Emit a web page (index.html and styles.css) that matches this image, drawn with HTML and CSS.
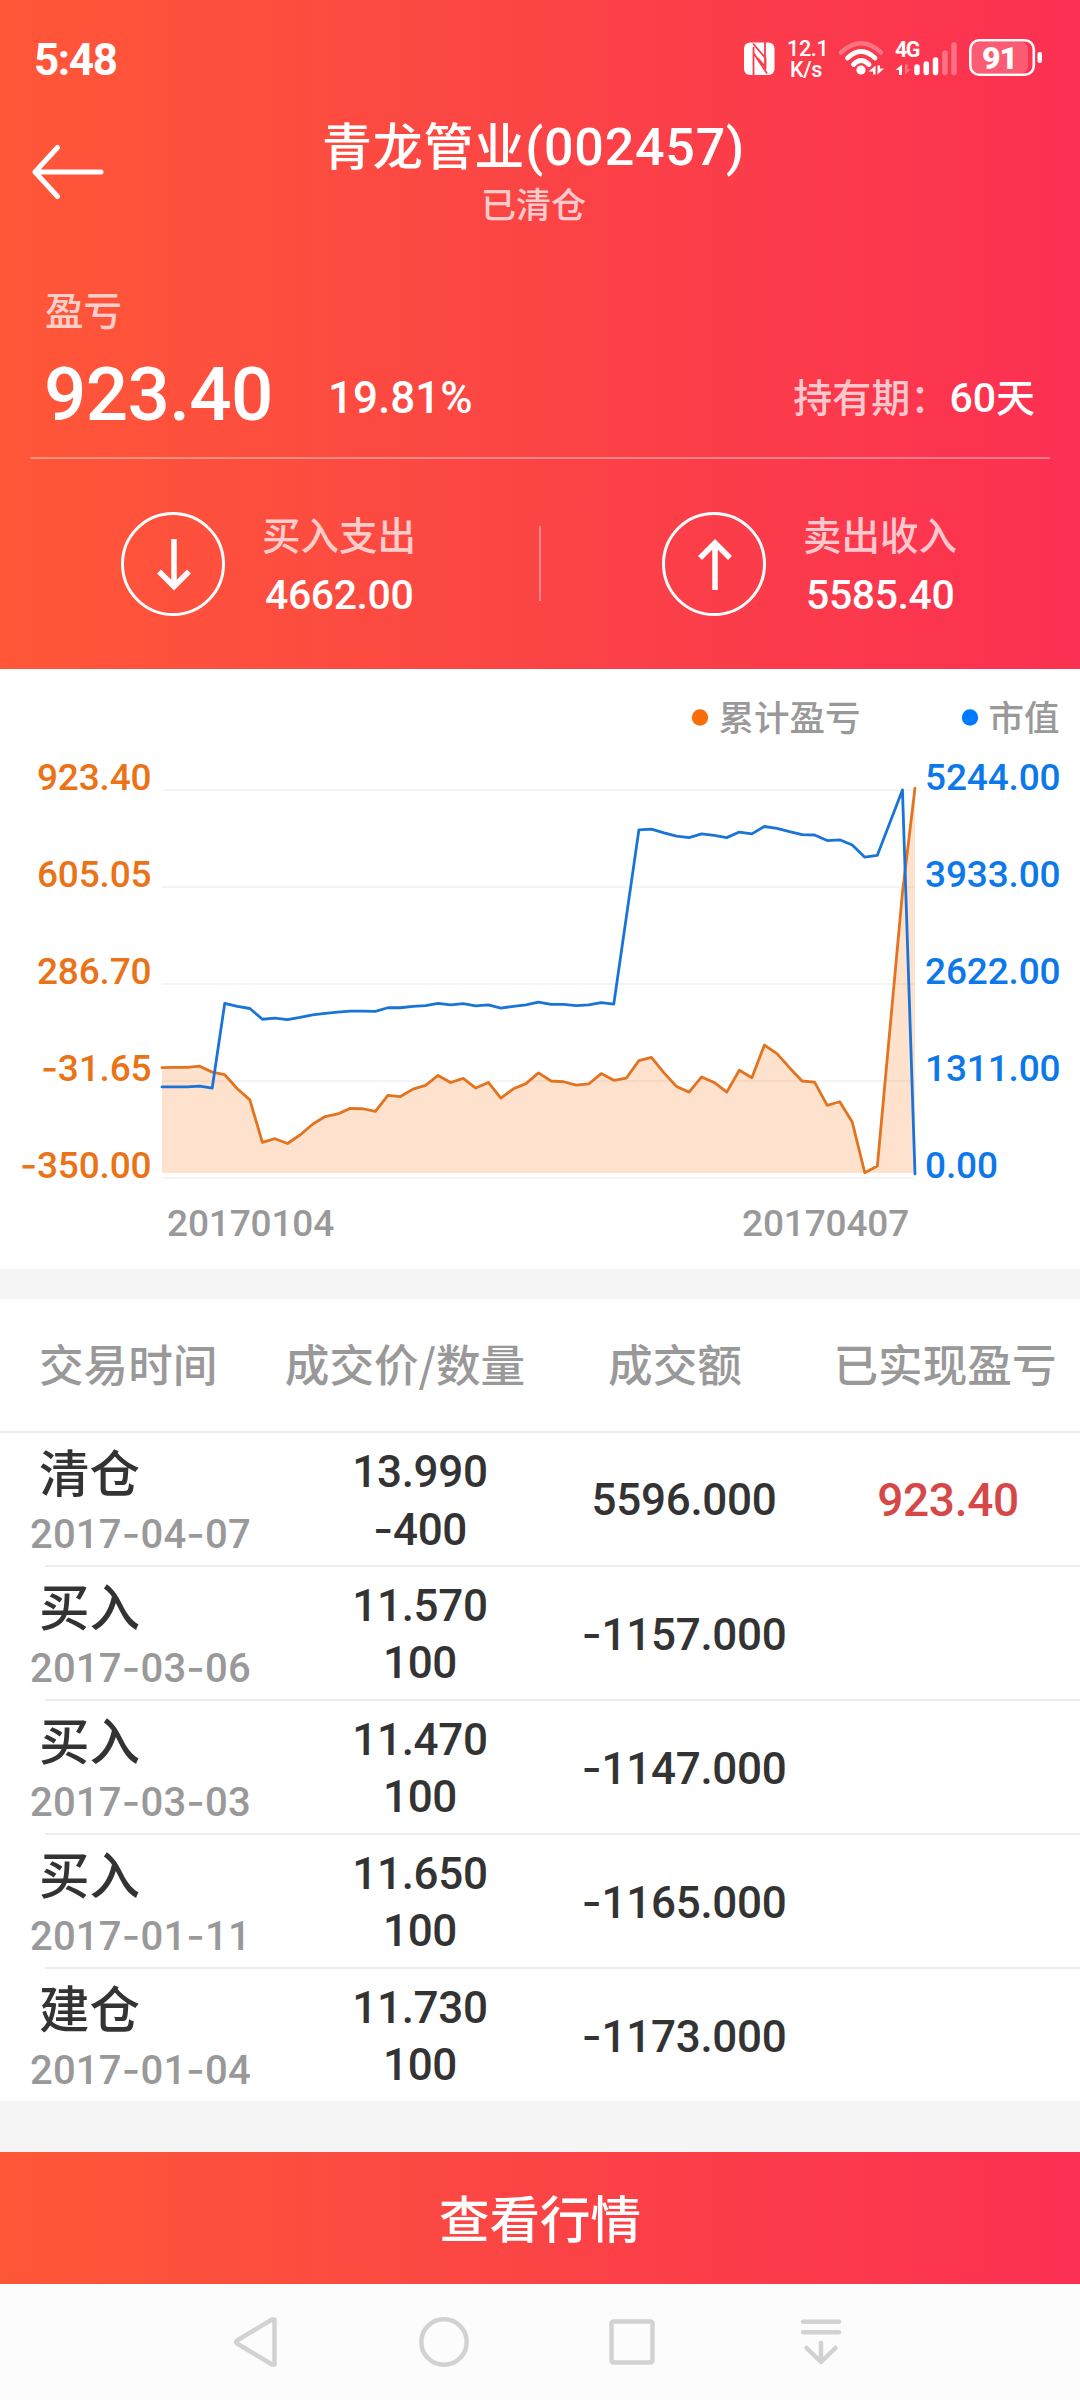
FILE: index.html
```html
<!DOCTYPE html>
<html lang="zh-CN">
<head>
<meta charset="utf-8">
<title>青龙管业(002457)</title>
<link rel="stylesheet" href="styles.css">
</head>
<body>
<div class="screen">
  <header class="hero">
    <div class="status">
      <span class="clock">5:48</span>
      <svg class="status-icons" viewBox="740 30 310 56" width="310" height="56">
        <rect x="744" y="42.500" width="30.500" height="32.500" rx="6" fill="#fff"/>
        <path d="M753.500 75V47M753 43.500L765.500 58V67L757.500 58M765 42V70M753.500 53L767 73.500" fill="none" stroke="#fb3b4a" stroke-width="1.800"/>
        <text class="net" x="787" y="55.500">12.1</text>
        <text class="net" x="790" y="76.500">K/s</text>
        <g fill="none" stroke="#fff" stroke-linecap="round">
          <path d="M841 52.500Q861 34 881 52.500" stroke-width="4.500" opacity=".3"/>
          <path d="M847.500 58Q861 45 875 58" stroke-width="4.800"/>
          <path d="M853.500 64.500Q861 56.500 869 64.500" stroke-width="4.800"/>
        </g>
        <circle cx="861" cy="70" r="4.600" fill="#fff"/>
        <path d="M875.500 65.500V74.500H873V71.500H868.500ZM877.500 74.500V65.500H880V68.500H884Z" fill="#fff"/>
        <text class="cell" x="895" y="57">4G</text>
        <path d="M902 64.500V75H899V70H895.500Z" fill="#fff"/>
        <path d="M905 75V64.500H907.500V69H911Z" fill="#fff" opacity=".3"/>
        <g stroke="#fff" stroke-width="5.500" stroke-linecap="round">
          <path d="M917 67V72.500M926.300 64V72.500M935.500 60V72.500"/>
          <path d="M945 53V72.500M954 45V72.500" opacity=".3"/>
        </g>
        <rect x="972" y="42" width="56" height="31" rx="6" fill="#fff" opacity=".2"/>
        <rect x="970.300" y="40.300" width="63.500" height="34.500" rx="9" fill="none" stroke="#fff" stroke-width="2.600"/>
        <rect x="1037.500" y="52" width="4.500" height="11" rx="2" fill="#fff"/>
        <text class="batt" x="999.500" y="69" text-anchor="middle">91</text>
      </svg>
    </div>
    <div class="titlebar">
      <svg class="back" viewBox="0 0 76 60" width="76" height="60">
        <path d="M70 30H4M26.500 5.500L4 30L26.500 54.500" fill="none" stroke="#fff" stroke-width="5" stroke-linecap="round" stroke-linejoin="round"/>
      </svg>
      <div class="titles">
        <h1>青龙管业<span class="num">(002457)</span></h1>
        <p>已清仓</p>
      </div>
    </div>
    <div class="label">盈亏</div>
    <div class="summary">
      <span class="profit">923.40</span>
      <span class="rate">19.81%</span>
      <span class="hold"><span class="soft">持有期：</span><span class="days">60</span>天</span>
    </div>
    <div class="flows">
      <div class="flow">
        <svg viewBox="0 0 104 104" width="104" height="104" fill="none" stroke="#fff">
          <circle cx="52" cy="52" r="50.500" stroke-width="3"/>
          <path d="M53 27V74M38 59.500L53 74.500L68 59.500" stroke-width="5.500"/>
        </svg>
        <div class="flow-text"><span>买入支出</span><b>4662.00</b></div>
      </div>
      <div class="flow">
        <svg viewBox="0 0 104 104" width="104" height="104" fill="none" stroke="#fff">
          <circle cx="52" cy="52" r="50.500" stroke-width="3"/>
          <path d="M53 78V31M38 46L53 31L68 46" stroke-width="5.500"/>
        </svg>
        <div class="flow-text"><span>卖出收入</span><b>5585.40</b></div>
      </div>
    </div>
  </header>

  <svg class="chart" viewBox="0 669 1080 600" width="1080" height="600">
    <circle cx="700" cy="717.500" r="8.200" fill="#fa6e0a"/>
    <text class="legend" x="718.500" y="731">累计盈亏</text>
    <circle cx="970" cy="717.500" r="8.200" fill="#007bff"/>
    <text class="legend" x="988.500" y="731">市值</text>
    <path d="M162 790H915M162 887H915M162 984H915M162 1081H915M162 1178H915" stroke="#f4f4f4" stroke-width="2"/>
    <svg x="162" y="783.600" width="753" height="395.800" viewBox="0 280 60 1070" preserveAspectRatio="none" overflow="visible">
      <path class="area" d="M0 1333V1048L1 1047L2 1047L3 1044L4 1060L5 1067L6 1105L7 1135L8 1250L9 1240L10 1253L11 1230L12 1201L13 1180L14 1173L15 1158L16 1159L17 1166L18 1123L19 1126L20 1106L21 1096L22 1069L23 1088L24 1077L25 1103L26 1088L27 1130L28 1105L29 1091L30 1062L31 1084L32 1086L33 1095L34 1092L35 1064L36 1082L37 1076L38 1029L39 1020L40 1062L41 1099L42 1114L43 1073L44 1088L45 1114L46 1055L47 1075L48 987L49 1010L50 1048L51 1084L52 1087L53 1150L54 1140L55 1195L56 1332L57 1314L59 575L60 292V1333Z"/>
      <polyline class="line gain" points="0,1048 1,1047 2,1047 3,1044 4,1060 5,1067 6,1105 7,1135 8,1250 9,1240 10,1253 11,1230 12,1201 13,1180 14,1173 15,1158 16,1159 17,1166 18,1123 19,1126 20,1106 21,1096 22,1069 23,1088 24,1077 25,1103 26,1088 27,1130 28,1105 29,1091 30,1062 31,1084 32,1086 33,1095 34,1092 35,1064 36,1082 37,1076 38,1029 39,1020 40,1062 41,1099 42,1114 43,1073 44,1088 45,1114 46,1055 47,1075 48,987 49,1010 50,1048 51,1084 52,1087 53,1150 54,1140 55,1195 56,1332 57,1314 59,575 60,292"/>
      <polyline class="line value" points="0,1100 1,1100 2,1100 3,1098 4,1103 5,874 6,882 7,888 8,917 9,914 10,918 11,912 12,905 13,901 14,898 15,895 16,895 17,896 18,886 19,886 20,882 21,880 22,874 23,878 24,875 25,881 26,878 27,887 28,882 29,878 30,871 31,877 32,877 33,880 34,878 35,872 36,876 38,405 39,403 40,413 41,422 42,426 43,416 44,420 45,426 46,411 47,416 48,396 49,401 50,410 51,418 52,419 53,434 54,432 55,446 56,479 57,474 59,297 60,1335"/>
    </svg>
    <g class="axis left">
      <text x="151.500" y="790">923.40</text>
      <text x="151.500" y="887">605.05</text>
      <text x="151.500" y="984">286.70</text>
      <text x="151.500" y="1081"><tspan class="dash">-</tspan>31.65</text>
      <text x="151.500" y="1178"><tspan class="dash">-</tspan>350.00</text>
    </g>
    <g class="axis right">
      <text x="925" y="790">5244.00</text>
      <text x="925" y="887">3933.00</text>
      <text x="925" y="984">2622.00</text>
      <text x="925" y="1081">1311.00</text>
      <text x="925" y="1178">0.00</text>
    </g>
    <g class="axis dates">
      <text x="167" y="1236">20170104</text>
      <text x="742" y="1236">20170407</text>
    </g>
  </svg>

  <section class="trades">
    <div class="thead"><span>交易时间</span><span>成交价/数量</span><span>成交额</span><span>已实现盈亏</span></div>
    <div class="row first">
      <div class="when"><strong>清仓</strong><time>2017<i>-</i>04<i>-</i>07</time></div>
      <div class="price"><span>13.990</span><span><i>-</i>400</span></div>
      <div class="amount">5596.000</div>
      <div class="realized">923.40</div>
    </div>
    <div class="row">
      <div class="when"><strong>买入</strong><time>2017<i>-</i>03<i>-</i>06</time></div>
      <div class="price"><span>11.570</span><span>100</span></div>
      <div class="amount"><i>-</i>1157.000</div>
    </div>
    <div class="row">
      <div class="when"><strong>买入</strong><time>2017<i>-</i>03<i>-</i>03</time></div>
      <div class="price"><span>11.470</span><span>100</span></div>
      <div class="amount"><i>-</i>1147.000</div>
    </div>
    <div class="row">
      <div class="when"><strong>买入</strong><time>2017<i>-</i>01<i>-</i>11</time></div>
      <div class="price"><span>11.650</span><span>100</span></div>
      <div class="amount"><i>-</i>1165.000</div>
    </div>
    <div class="row">
      <div class="when"><strong>建仓</strong><time>2017<i>-</i>01<i>-</i>04</time></div>
      <div class="price"><span>11.730</span><span>100</span></div>
      <div class="amount"><i>-</i>1173.000</div>
    </div>
  </section>

  <button class="quote">查看行情</button>

  <nav class="sysnav">
    <svg viewBox="0 2284 1080 116" width="1080" height="116" fill="none" stroke="#d2d2d2" stroke-width="4.500" stroke-linecap="round" stroke-linejoin="round">
      <path d="M274.500 2319.500V2364.500L272 2364.500L237 2343.500Q235.500 2342 237 2340.500L272 2319.500Z"/>
      <circle cx="444" cy="2342" r="22.700"/>
      <rect x="611.500" y="2321.500" width="41" height="41" rx="2"/>
      <path d="M803 2321.700H839M803 2332.300H839M821 2343V2362M806.500 2348L821 2362L835.500 2348"/>
    </svg>
  </nav>
</div>
</body>
</html>
```
FILE: styles.css
```css
* { box-sizing: border-box; margin: 0; padding: 0; }

body {
  width: 1080px;
  background: #f5f5f5;
  color: #333;
  font-family: Roboto, "Noto Sans CJK SC", sans-serif;
  font-weight: 500;
}

.screen {
  display: flex;
  flex-direction: column;
  width: 1080px;
  height: 2400px;
}

i { font-family: Inter, sans-serif; font-style: normal; }

/* Header */
.hero {
  display: flex;
  flex-direction: column;
  height: 669px;
  color: #fff;
  background: linear-gradient(90deg, #ff5738, #fb4445 50%, #fc3052);
}

.status {
  display: flex;
  justify-content: space-between;
  height: 110px;
  padding: 30px 30px 0 34px;
}

.clock { font-size: 44px; line-height: 60px; font-weight: 700; letter-spacing: -1.4px; }
.status-icons { display: block; }
.net { font-size: 21.500px; fill: #fff; letter-spacing: -.3px; }
.cell { font-size: 21.500px; font-weight: 700; fill: #fff; letter-spacing: -1.5px; }
.batt { font-size: 32px; font-weight: 900; fill: #fff; letter-spacing: -1px; }

.titlebar { display: flex; height: 170px; padding-left: 31px; }
.back { margin-top: 32px; }
.titles { width: 853px; text-align: center; }
h1 { font: 500 50px/70px "Noto Sans CJK SC", sans-serif; letter-spacing: .8px; margin-top: -2px; }
.num { font: 500 52px/70px Roboto, sans-serif; }
.titles p { margin-top: -5px; font: 500 35px/50px "Noto Sans CJK SC", sans-serif; opacity: .72; }

.label {
  padding-left: 45px;
  font: 500 38.500px/56px "Noto Sans CJK SC", sans-serif;
  opacity: .72;
}

.summary {
  display: flex;
  align-items: flex-start;
  height: 123px;
  margin: 0 30px;
  padding: 9px 15px 0 14px;
  line-height: 100px;
  border-bottom: 2px solid rgba(255, 255, 255, .35);
}

.profit { width: 284px; font-size: 74.500px; letter-spacing: -.6px; }
.rate { padding-top: 3px; font-size: 44px; }
.hold { margin-left: auto; padding-top: 3px; font-size: 39px; }
.soft { opacity: .72; }
.days { font-size: 41px; }

.flows { display: grid; grid-template-columns: 541px 539px; margin-top: 53px; }
.flow { display: flex; align-items: flex-start; gap: 37px; padding-left: 121px; }
.flow:first-child {
  background: linear-gradient(rgba(255, 255, 255, .35), rgba(255, 255, 255, .35)) right 14px / 2px 75px no-repeat;
}
.flow-text { display: flex; flex-direction: column; margin-top: -5px; }
.flow-text span { font: 500 38.500px/52px "Noto Sans CJK SC", sans-serif; opacity: .72; }
.flow-text b { padding: 6px 0 0 3px; font-size: 41px; line-height: 60px; font-weight: 500; letter-spacing: -.4px; }

/* Chart */
.chart { display: block; background: #fff; flex: none; }
.legend { font: 500 35.500px "Noto Sans CJK SC", sans-serif; fill: #999; }
.axis { font-size: 37px; letter-spacing: -.15px; }
.left { text-anchor: end; fill: #ea7318; }
.right { fill: #0d78ea; }
.dates { fill: #999; }
.dash { font-family: Inter, sans-serif; }
.area { fill: #fa6e0a; fill-opacity: .2; }
.line {
  fill: none;
  stroke-width: 2.800;
  stroke-linejoin: round;
  stroke-linecap: round;
  vector-effect: non-scaling-stroke;
}
.gain { stroke: #e3731f; }
.value { stroke: #1a74d8; }

/* Trades */
.trades { margin-top: 30px; background: #fff; }
.thead {
  display: grid;
  grid-template-columns: repeat(4, 270px);
  height: 132px;
  font: 500 44.600px/127px "Noto Sans CJK SC", sans-serif;
  color: #999;
  text-align: center;
}
.thead span:first-child { text-align: left; padding-left: 39px; }

.row {
  display: grid;
  grid-template-columns: 302px 236px 292px 236px;
  height: 134px;
  padding-top: 2px;
  font-size: 44px;
  letter-spacing: -.3px;
  text-align: center;
  background: linear-gradient(#ececec, #ececec) 45px 0 / 1035px 2px no-repeat;
}
.row.first { background-position: 0 0; background-size: 1080px 2px; }
.when, .price { display: flex; flex-direction: column; }
.when { text-align: left; padding-left: 30px; letter-spacing: 0; }
.when strong { padding-left: 9px; font: 500 50.500px/74px "Noto Sans CJK SC", sans-serif; }
.when time { font-size: 40px; line-height: 54px; color: #999; letter-spacing: .2px; }
.price { padding-top: 11px; line-height: 57px; }
.amount, .realized { line-height: 134px; }
.realized { font-size: 46px; color: #d64848; }

/* Footer */
.quote {
  height: 132px;
  margin-top: 51px;
  border: 0;
  color: #fff;
  font: 500 50.500px/123px "Noto Sans CJK SC", sans-serif;
  padding-bottom: 4px;
  background: linear-gradient(90deg, #ff5738, #fb4445 50%, #fc3052);
}
.sysnav { height: 116px; background: #fcfcfc; }
.sysnav svg { display: block; }
```
